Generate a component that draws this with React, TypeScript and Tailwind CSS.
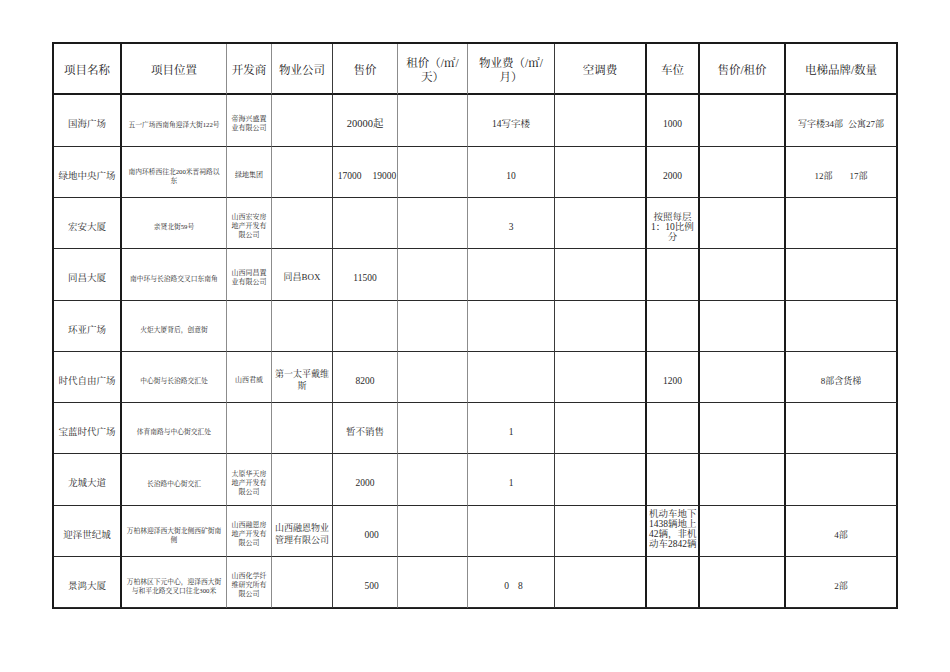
import React from "react";

type CellSpec = { c: React.ReactNode; cls?: string } | React.ReactNode;

const L = (...lines: string[]) => (
  <span>
    {lines.map((l, i) => (
      <React.Fragment key={i}>
        {i > 0 && <br />}
        {l}
      </React.Fragment>
    ))}
  </span>
);

const colBorders = [
  "border-r-2 border-r-[#1a1a1a]",
  "border-r border-r-[#8c8c8c]",
  "border-r border-r-[#8c8c8c]",
  "border-r border-r-[#3a3a3a]",
  "border-r border-r-[#8c8c8c]",
  "border-r border-r-[#8c8c8c]",
  "border-r border-r-[#3a3a3a]",
  "border-r-2 border-r-[#1a1a1a]",
  "border-r-2 border-r-[#1a1a1a]",
  "border-r-2 border-r-[#1a1a1a]",
  "border-r-2 border-r-[#1a1a1a]",
];

const bodyFont = [
  "text-[9.5px] leading-[12px]",
  "text-[6.75px] leading-[9px]",
  "text-[7px] leading-[9px]",
  "text-[9px] leading-[11.5px]",
  "text-[9.5px] leading-[12px]",
  "text-[9.5px] leading-[12px]",
  "text-[9.5px] leading-[12px]",
  "text-[9.5px] leading-[12px]",
  "text-[9.5px] leading-[10px]",
  "text-[9.5px] leading-[12px]",
  "text-[9px] leading-[12px]",
];

const header: React.ReactNode[] = [
  "项目名称",
  "项目位置",
  "开发商",
  "物业公司",
  "售价",
  L("租价（/㎡/", "天）"),
  L("物业费（/㎡/", "月）"),
  "空调费",
  "车位",
  "售价/租价",
  "电梯品牌/数量",
];

const rows: CellSpec[][] = [
  [
    "国海广场",
    "五一广场西南角迎泽大街122号",
    L("帝海兴盛置", "业有限公司"),
    "",
    { c: "20000起", cls: "text-[10.5px]" },
    "",
    "14写字楼",
    "",
    "1000",
    "",
    <span>
      写字楼34部<span className="ml-[5px]">公寓27部</span>
    </span>,
  ],
  [
    "绿地中央广场",
    L("南内环桥西往北200米晋祠路以", "东"),
    "绿地集团",
    "",
    {
      c: (
        <span>
          17000<span className="ml-[11px]">19000</span>
        </span>
      ),
      cls: "pl-[4px]",
    },
    "",
    "10",
    "",
    "2000",
    "",
    <span>
      12部<span className="ml-[17px]">17部</span>
    </span>,
  ],
  [
    "宏安大厦",
    "亲贤北街59号",
    L("山西宏安房", "地产开发有", "限公司"),
    "",
    "",
    "",
    "3",
    "",
    { c: L("按照每层", "1：10比例", "分"), cls: "pt-[3px]" },
    "",
    "",
  ],
  [
    "同昌大厦",
    "南中环与长治路交叉口东南角",
    L("山西同昌置", "业有限公司"),
    "同昌BOX",
    "11500",
    "",
    "",
    "",
    "",
    "",
    "",
  ],
  ["环亚广场", "火炬大厦背后，创意街", "", "", "", "", "", "", "", "", ""],
  [
    "时代自由广场",
    "中心街与长治路交汇处",
    "山西君威",
    L("第一太平戴维", "斯"),
    "8200",
    "",
    "",
    "",
    "1200",
    "",
    "8部含货梯",
  ],
  [
    "宝蓝时代广场",
    "体育南路与中心街交汇处",
    "",
    "",
    "暂不销售",
    "",
    "1",
    "",
    "",
    "",
    "",
  ],
  [
    "龙城大道",
    "长治路中心街交汇",
    L("太原华天房", "地产开发有", "限公司"),
    "",
    "2000",
    "",
    "1",
    "",
    "",
    "",
    "",
  ],
  [
    "迎泽世纪城",
    L("万柏林迎泽西大街北侧西矿街南", "侧"),
    L("山西融恩房", "地产开发有", "限公司"),
    L("山西融恩物业", "管理有限公司"),
    { c: "000", cls: "pl-[13px]" },
    "",
    "",
    "",
    {
      c: L("机动车地下", "1438辆地上", "42辆，非机", "动车2842辆"),
      cls: "!justify-start !text-left pl-[2px] !pt-0 pb-[5px]",
    },
    "",
    "4部",
  ],
  [
    "景鸿大厦",
    L("万柏林区下元中心，迎泽西大街", "与和平北路交叉口往北300米"),
    L("山西化学纤", "维研究所有", "限公司"),
    "",
    { c: "500", cls: "pl-[13px]" },
    "",
    {
      c: (
        <span>
          0<span className="ml-[9px]">8</span>
        </span>
      ),
      cls: "pl-[5px]",
    },
    "",
    "",
    "",
    "2部",
  ],
];

function isSpec(x: CellSpec): x is { c: React.ReactNode; cls?: string } {
  return (
    typeof x === "object" &&
    x !== null &&
    !React.isValidElement(x) &&
    "c" in (x as object)
  );
}

export default function App() {
  return (
    <div className="w-[950px] h-[672px] bg-white overflow-hidden font-['Liberation_Serif','Noto_Serif_CJK_SC','Noto_Sans_CJK_SC',serif]">
      <div className="ml-[52px] mt-[42px] w-[846px] grid grid-cols-[68px_105px_45px_61px_65px_70px_87px_92px_53px_86px_112px] grid-rows-[51px_52px_51px_51px_52px_51px_51px_51px_52px_51px_51px] border-t-2 border-l-2 border-b border-[#1a1a1a]">
        {header.map((h, i) => (
          <div
            key={`h${i}`}
            className={`flex items-center justify-center text-center whitespace-nowrap pt-[3px] text-[11.5px] leading-[14px] text-[#222] border-b-2 border-b-[#1a1a1a] ${colBorders[i]}`}
          >
            {h}
          </div>
        ))}
        {rows.map((r, ri) =>
          r.map((cell, ci) => {
            const spec = isSpec(cell) ? cell : { c: cell as React.ReactNode, cls: "" };
            return (
              <div
                key={`r${ri}c${ci}`}
                className={`flex items-center justify-center text-center whitespace-nowrap pt-[7px] text-[#2a2a2a] border-b border-b-[#2a2a2a] ${colBorders[ci]} ${bodyFont[ci]} ${spec.cls ?? ""}`}
              >
                {spec.c}
              </div>
            );
          })
        )}
      </div>
    </div>
  );
}
